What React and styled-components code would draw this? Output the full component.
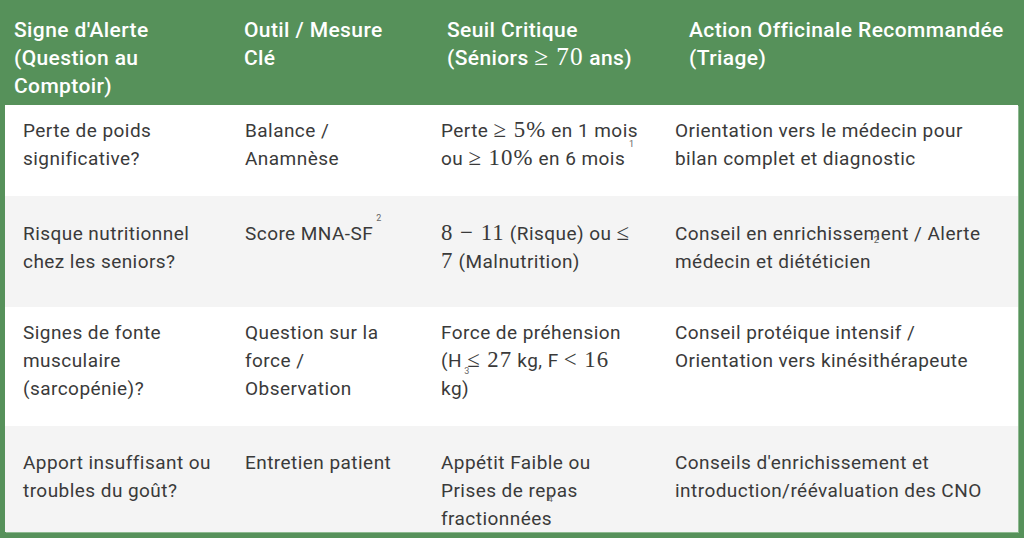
import React from 'react';
import styled, { createGlobalStyle } from 'styled-components';

const GlobalStyle = createGlobalStyle`
  html, body {
    margin: 0;
    padding: 0;
    background: #56915a;
  }
  body {
    font-family: Roboto, "Liberation Sans", Arial, sans-serif;
  }
`;

const Frame = styled.div`
  width: 1024px;
  height: 538px;
  box-sizing: border-box;
  padding: 0 6px 6px 5px;
  background: #56915a;
  display: flex;
  flex-direction: column;
  overflow: hidden;
`;

const HeadRow = styled.div`
  display: grid;
  grid-template-columns: 230px 203px 242px 1fr;
  height: 105px;
  box-sizing: border-box;
  padding: 16px 0 0 9px;
  flex-shrink: 0;
`;

const HeadCell = styled.div`
  color: #ffffff;
  font-size: 21px;
  font-weight: 500;
  line-height: 28px;
  letter-spacing: 0.4px;
  white-space: nowrap;
`;

const Body = styled.div`
  flex: 1;
  overflow: hidden;
  background: #f4f4f4;
  box-shadow: 1px 1px 0 #8db990;
`;

const Row = styled.div`
  display: grid;
  grid-template-columns: 222px 196px 234px 1fr;
  padding: ${({ $top }) => $top}px 0 ${({ $bottom }) => $bottom}px 18px;
  background: ${({ $alt }) => ($alt ? '#f4f4f4' : '#ffffff')};
`;

const Cell = styled.div`
  color: #3a3a3a;
  font-size: 19px;
  line-height: 28px;
  letter-spacing: 0.45px;
  white-space: nowrap;
`;

const Math = styled.span`
  font-family: "Liberation Serif", "Times New Roman", serif;
  font-size: 1.2em;
  font-weight: 400;
  letter-spacing: 1px;
  line-height: 0;
`;

const CiteAnchor = styled.span`
  position: relative;
  display: inline-block;
  width: 0;
  height: 0;
`;

const CiteMark = styled.span`
  position: absolute;
  left: ${({ $dx }) => $dx}px;
  top: ${({ $dy }) => $dy}px;
  font-size: 9px;
  line-height: 9px;
  letter-spacing: 0;
  color: #666666;
  font-family: Roboto, "Liberation Sans", sans-serif;
`;

const Cite = ({ n, dx = 0, dy = 0 }) => (
  <CiteAnchor>
    <CiteMark $dx={dx} $dy={dy}>{n}</CiteMark>
  </CiteAnchor>
);

const rows = [
  {
    top: 12,
    bottom: 23,
    cells: [
      <>Perte de poids<br />significative?</>,
      <>Balance /<br />Anamnèse</>,
      <>
        Perte <Math>≥ 5%</Math> en 1 mois<Cite n="1" dx={-9} dy={3} />
        <br />
        ou <Math>≥ 10%</Math> en 6 mois
      </>,
      <>Orientation vers le médecin pour<br />bilan complet et diagnostic</>,
    ],
  },
  {
    top: 24,
    bottom: 31,
    alt: true,
    cells: [
      <>Risque nutritionnel<br />chez les seniors?</>,
      <>Score MNA-SF<Cite n="2" dx={3} dy={-26} /></>,
      <>
        <Math>8 − 11</Math> (Risque) ou <Math>≤</Math>
        <br />
        <Math>7</Math> (Malnutrition)
      </>,
      <>Conseil en enrichissem<Cite n="2" dx={-7} dy={-4} />ent / Alerte<br />médecin et diététicien</>,
    ],
  },
  {
    top: 12,
    bottom: 23,
    cells: [
      <>Signes de fonte<br />musculaire<br />(sarcopénie)?</>,
      <>Question sur la<br />force /<br />Observation</>,
      <>
        Force de préhension
        <br />
        (H <Cite n="3" dx={-3} dy={0} /><Math>≤ 27</Math> kg, F <Math>&lt; 16</Math>
        <br />
        kg)
      </>,
      <>Conseil protéique intensif /<br />Orientation vers kinésithérapeute</>,
    ],
  },
  {
    top: 23,
    bottom: 0,
    alt: true,
    cells: [
      <>Apport insuffisant ou<br />troubles du goût?</>,
      <>Entretien patient</>,
      <>Appétit Faible ou<br />Prises de re<Cite n="4" dx={2} dy={-2} />pas<br />fractionnées</>,
      <>Conseils d'enrichissement et<br />introduction/réévaluation des CNO</>,
    ],
  },
];

const App = () => (
  <>
    <GlobalStyle />
    <Frame>
      <HeadRow>
        <HeadCell>Signe d'Alerte<br />(Question au<br />Comptoir)</HeadCell>
        <HeadCell>Outil / Mesure<br />Clé</HeadCell>
        <HeadCell>Seuil Critique<br />(Séniors <Math>≥ 70</Math> ans)</HeadCell>
        <HeadCell>Action Officinale Recommandée<br />(Triage)</HeadCell>
      </HeadRow>
      <Body>
        {rows.map((row, i) => (
          <Row key={i} $top={row.top} $bottom={row.bottom} $alt={row.alt}>
            {row.cells.map((c, j) => (
              <Cell key={j}>{c}</Cell>
            ))}
          </Row>
        ))}
      </Body>
    </Frame>
  </>
);

export default App;
